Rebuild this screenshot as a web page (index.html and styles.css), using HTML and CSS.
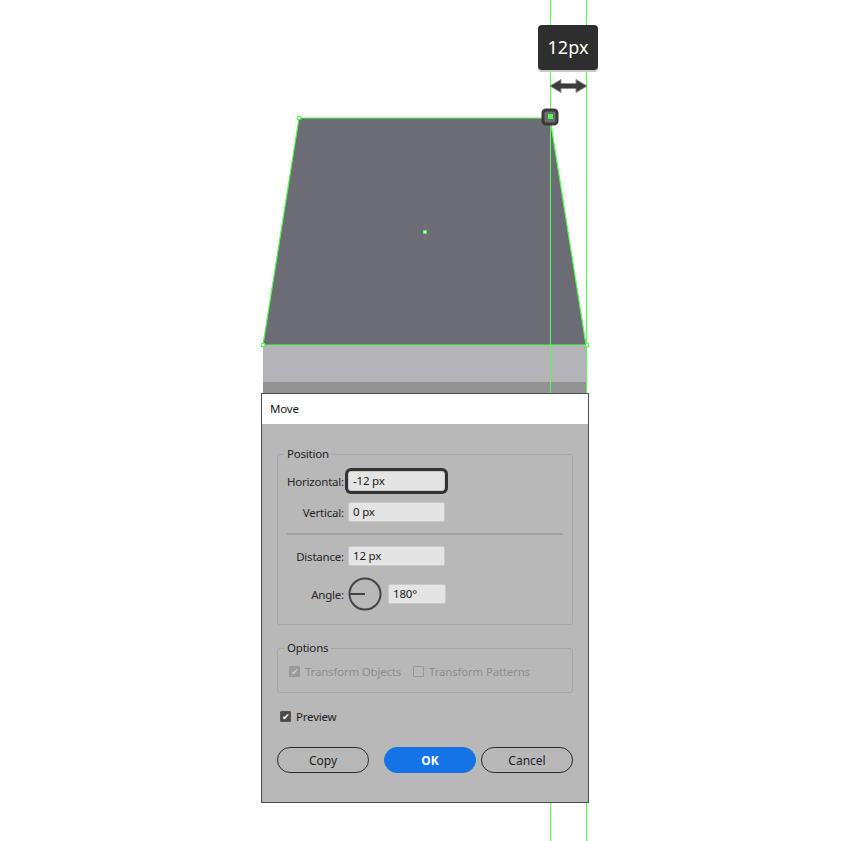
FILE: index.html
```html
<!DOCTYPE html>
<html>
<head>
    <link rel="stylesheet" href="styles.css">
</head>
<body>

    <div class="artboard">
        <!-- shape, guides and the selected anchor -->
        <svg class="artwork" width="850" height="841" viewBox="0 0 850 841">
            <rect x="263" y="345" width="323" height="37" fill="#b4b3b8"/>
            <rect x="263" y="382" width="323" height="11" fill="#939393"/>
            <polygon points="299,118 550,118 586,345 263,345" fill="#6c6c74" stroke="#4eff4e" stroke-width="1.2"/>
            <line x1="550.5" y1="0" x2="550.5" y2="841" stroke="#4eff4e" stroke-width="1"/>
            <line x1="586.5" y1="0" x2="586.5" y2="841" stroke="#4eff4e" stroke-width="1"/>
            <g fill="#fff" stroke="#4eff4e" stroke-width="1">
                <rect x="297.5" y="116.5" width="3" height="3"/>
                <rect x="261.5" y="343.5" width="3" height="3"/>
                <rect x="585.5" y="343.5" width="3" height="3"/>
                <rect x="423.5" y="230.5" width="3" height="3"/>
            </g>
            <rect x="543" y="110" width="14" height="14" rx="3" fill="#6e6e72" stroke="#3a3a3a" stroke-width="3"/>
            <rect x="548" y="114" width="5" height="5" fill="#4eff4e"/>
            <path d="M550 86 L561 79.5 L561 83.5 L576 83.5 L576 79.5 L587 86 L576 92.5 L576 88.5 L561 88.5 L561 92.5 Z"
                  fill="#3c3c3c" stroke="#8c8c8c" stroke-width="1"/>
        </svg>

        <div class="tooltip">12px</div>

        <div class="dialog">
            <div class="titlebar">Move</div>
            <div class="dialog-body">

                <fieldset class="group position">
                    <legend>Position</legend>
                    <div class="row">
                        <label>Horizontal:</label>
                        <div class="field focused">-12 px</div>
                    </div>
                    <div class="row">
                        <label>Vertical:</label>
                        <div class="field">0 px</div>
                    </div>
                    <div class="separator"></div>
                    <div class="row">
                        <label>Distance:</label>
                        <div class="field">12 px</div>
                    </div>
                    <div class="row angle-row">
                        <label>Angle:</label>
                        <svg class="dial" width="34" height="34" viewBox="0 0 34 34">
                            <circle cx="17" cy="17" r="15.5" fill="none" stroke="#444" stroke-width="2"/>
                            <line x1="2" y1="17" x2="17" y2="17" stroke="#444" stroke-width="2"/>
                        </svg>
                        <div class="field short">180°</div>
                    </div>
                </fieldset>

                <fieldset class="group options">
                    <legend>Options</legend>
                    <div class="checks">
                        <span class="check disabled checked"><span class="box">&#10004;</span>Transform Objects</span>
                        <span class="check disabled"><span class="box"></span>Transform Patterns</span>
                    </div>
                </fieldset>

                <div class="check preview checked"><span class="box">&#10004;</span>Preview</div>

                <div class="buttons">
                    <button class="btn">Copy</button>
                    <button class="btn primary">OK</button>
                    <button class="btn">Cancel</button>
                </div>
            </div>
        </div>
    </div>

</body>
</html>
```

FILE: styles.css
```css
body {
    margin: 0;
    background-color: #fff;
    font-family: "Noto Sans", "Open Sans", sans-serif;
    color: #1e1e1e;
}

.artboard {
    position: relative;
    width: 850px;
    height: 841px;
    overflow: hidden;
}

.artwork {
    display: block;
}

.tooltip {
    position: absolute;
    left: 538px;
    top: 25px;
    width: 60px;
    height: 45px;
    border-radius: 4px;
    background-color: #2e2e2e;
    box-shadow: 0 2px 0 #c8c8c8;
    color: #fff;
    font-size: 18px;
    line-height: 45px;
    text-align: center;
}

.dialog {
    position: absolute;
    left: 261px;
    top: 393px;
    width: 326px;
    height: 408px;
    border: 1px solid #4d4d4d;
    background-color: #b8b8b8;
    font-size: 11.5px;
    letter-spacing: -0.2px;
}

.titlebar {
    height: 30px;
    line-height: 30px;
    padding-left: 8px;
    background-color: #fff;
    color: #1a1a1a;
}

.dialog-body {
    padding: 22px 15px 0 15px;
}

.group {
    margin: 0;
    border: 1px solid #a6a6a6;
    border-radius: 3px;
    padding: 0;
}

.group legend {
    margin-left: 6px;
    padding: 0 3px;
    color: #1e1e1e;
    line-height: 16px;
}

.position {
    height: 168px;
    padding-top: 9px;
}

.row {
    display: flex;
    align-items: center;
    height: 20px;
    margin-bottom: 11px;
}

.row label {
    width: 66px;
    text-align: right;
    margin-right: 4px;
    color: #262626;
}

.field {
    box-sizing: border-box;
    width: 97px;
    height: 20px;
    padding-left: 4px;
    line-height: 18px;
    background-color: #e4e4e4;
    border: 1px solid #c9c9c9;
    border-radius: 2px;
    color: #1a1a1a;
}

.field.focused {
    box-shadow: 0 0 0 3px #333;
    border-radius: 3px;
}

.field.short {
    width: 58px;
}

.separator {
    height: 2px;
    margin: 0 9px 11px 9px;
    background-color: #a3a3a3;
}

.angle-row {
    height: 34px;
    margin-top: 7px;
}

.dial {
    margin-right: 6px;
}

.options {
    margin-top: 15px;
    padding: 7px 0 12px 0;
}

.checks {
    display: flex;
    gap: 12px;
    padding-left: 11px;
    height: 17px;
}

.check {
    display: flex;
    align-items: center;
    gap: 5px;
}

.box {
    box-sizing: border-box;
    width: 11px;
    height: 11px;
    border: 1px solid #555;
    border-radius: 1px;
    font-size: 9px;
    line-height: 9px;
    text-align: center;
    color: #fff;
}

.check.checked .box {
    background-color: #4a4a4a;
}

.check.disabled {
    color: #8e8e8e;
}

.check.disabled .box {
    border-color: #979797;
}

.check.disabled.checked .box {
    background-color: #9a9a9a;
    color: #cfcfcf;
}

.preview {
    height: 17px;
    margin: 15px 0 0 3px;
}

.buttons {
    display: flex;
    gap: 15px;
    margin-top: 22px;
}

.btn {
    width: 92px;
    height: 26px;
    border: 1px solid #2b2b2b;
    border-radius: 13px;
    background-color: transparent;
    font-family: "Noto Sans", "Open Sans", sans-serif;
    font-size: 12px;
    color: #1e1e1e;
    cursor: pointer;
}

.btn.primary {
    border-color: #1473e6;
    background-color: #1473e6;
    color: #fff;
    font-weight: bold;
}

.buttons .btn:last-child {
    margin-left: -10px;
}
```
